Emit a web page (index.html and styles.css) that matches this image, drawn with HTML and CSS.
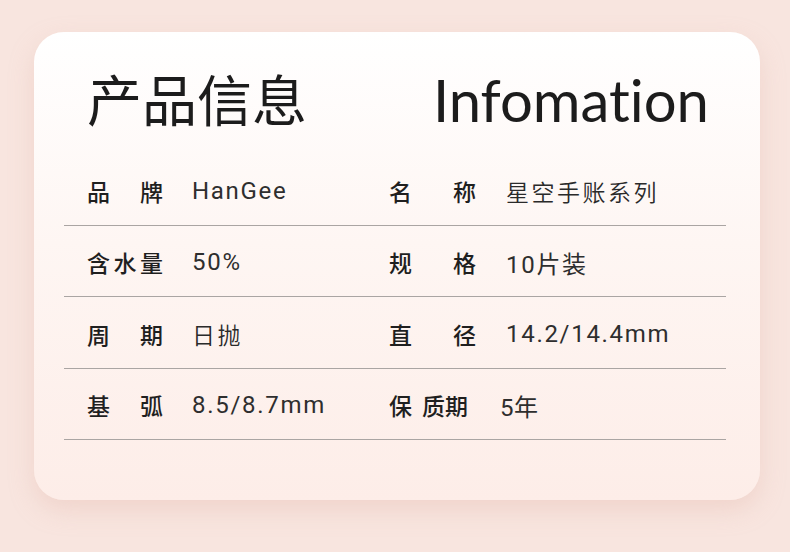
FILE: index.html
```html
<!DOCTYPE html>
<html lang="zh">
<head>
<meta charset="utf-8">
<link rel="stylesheet" href="styles.css">
</head>
<body>
<div class="card">
  <div class="header">
    <h1 class="title-cn">产品信息</h1>
    <h2 class="title-en">Infomation</h2>
  </div>
  <div class="table">
    <div class="row">
      <div class="cell left"><span class="label"><span>品</span><span>牌</span></span><span class="value latin">HanGee</span></div>
      <div class="cell right"><span class="label"><span>名</span><span>称</span></span><span class="value cn">星空手账系列</span></div>
    </div>
    <div class="row">
      <div class="cell left"><span class="label"><span>含</span><span>水</span><span>量</span></span><span class="value latin">50%</span></div>
      <div class="cell right"><span class="label"><span>规</span><span>格</span></span><span class="value latin">10片装</span></div>
    </div>
    <div class="row tall">
      <div class="cell left"><span class="label"><span>周</span><span>期</span></span><span class="value cn">日抛</span></div>
      <div class="cell right"><span class="label"><span>直</span><span>径</span></span><span class="value latin">14.2/14.4mm</span></div>
    </div>
    <div class="row">
      <div class="cell left"><span class="label"><span>基</span><span>弧</span></span><span class="value latin">8.5/8.7mm</span></div>
      <div class="cell right"><span class="label short"><span>保</span><span>质期</span></span><span class="value latin tight">5年</span></div>
    </div>
  </div>
</div>
</body>
</html>
```
FILE: styles.css
```css
html, body {
  margin: 0;
  padding: 0;
}
body {
  width: 790px;
  height: 552px;
  background: #f8e5df;
  font-family: "Noto Sans CJK SC", sans-serif;
  overflow: hidden;
}
.card {
  margin: 32px 30px 0 34px;
  width: 726px;
  height: 468px;
  box-sizing: border-box;
  border-radius: 30px;
  background: linear-gradient(180deg, #ffffff 0%, #fef6f3 45%, #fdede8 100%);
  box-shadow: 0 10px 24px rgba(225, 180, 168, 0.35);
}
.header {
  height: 123px;
  box-sizing: border-box;
  padding: 0 51px 0 53px;
  display: flex;
  justify-content: space-between;
  align-items: flex-start;
}
.title-cn {
  margin: 38px 0 0 0;
  font-family: "Noto Sans CJK SC", sans-serif;
  font-weight: 400;
  font-size: 55px;
  line-height: 1;
  color: #1c1c1c;
}
.title-en {
  margin: 39px 0 0 0;
  font-family: "Lato", sans-serif;
  font-weight: 400;
  font-size: 58px;
  line-height: 1;
  font-variant-ligatures: none;
  font-feature-settings: "liga" 0;
  color: #1c1c1c;
}
.table {
  margin: 0 34px 0 30px;
}
.row {
  display: flex;
  height: 71px;
  padding-top: 2px;
  box-sizing: border-box;
  border-bottom: 1px solid #aaa5a3;
  align-items: center;
}
.row.tall {
  height: 72px;
}
.cell {
  display: flex;
  align-items: center;
}
.cell.left {
  width: 325px;
  padding-left: 23px;
  box-sizing: border-box;
}
.cell.right {
  padding-left: 0;
}
.label {
  display: flex;
  justify-content: space-between;
  font-family: "Noto Sans CJK SC", sans-serif;
  font-weight: 500;
  font-size: 23px;
  color: #1f1f1f;
}
.left .label {
  width: 76px;
  margin-right: 29px;
}
.right .label {
  width: 87px;
  margin-right: 30px;
}
.right .label.short {
  width: 79px;
  margin-right: 32px;
}
.value {
  color: #2e2e2e;
  font-weight: 400;
  font-size: 23px;
}
.value.latin {
  font-family: "Roboto", "Noto Sans CJK SC", sans-serif;
  font-size: 24px;
  letter-spacing: 1.7px;
}
.value.cn {
  font-family: "Noto Sans CJK SC", sans-serif;
  letter-spacing: 2.5px;
  font-weight: 350;
  color: #2a2a2a;
}
.value.tight {
  letter-spacing: 0.5px;
}
```
